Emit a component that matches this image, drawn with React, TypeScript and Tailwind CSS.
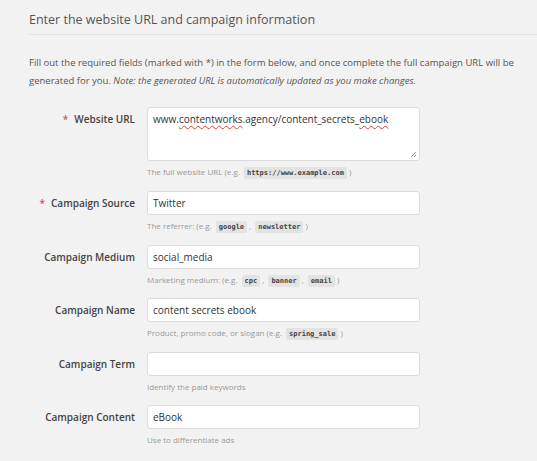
import React from "react";

type Field = {
  label: string;
  required?: boolean;
  value: string;
  hint: React.ReactNode;
};

function Code({ children }: { children: React.ReactNode }) {
  return (
    <code className="mx-[2px] rounded-[2px] bg-[#e4e3e3] px-[3px] py-[2px] font-['DejaVu_Sans_Mono',monospace] text-[7px] leading-[10px] font-bold text-[#444]">
      {children}
    </code>
  );
}

const fields: Field[] = [
  {
    label: "Campaign Source",
    required: true,
    value: "Twitter",
    hint: (
      <>
        The referrer: (e.g. <Code>google</Code>, <Code>newsletter</Code>)
      </>
    ),
  },
  {
    label: "Campaign Medium",
    value: "social_media",
    hint: (
      <>
        Marketing medium: (e.g. <Code>cpc</Code>, <Code>banner</Code>, <Code>email</Code>)
      </>
    ),
  },
  {
    label: "Campaign Name",
    value: "content secrets ebook",
    hint: (
      <>
        Product, promo code, or slogan (e.g. <Code>spring_sale</Code>)
      </>
    ),
  },
  { label: "Campaign Term", value: "", hint: "Identify the paid keywords" },
  { label: "Campaign Content", value: "eBook", hint: "Use to differentiate ads" },
];

function Label({ text, required }: { text: string; required?: boolean }) {
  return (
    <div className="w-[135px] shrink-0 text-right text-[10px] leading-[24px] font-semibold text-[#444]">
      {required && <span className="mr-[6px] text-[#d9534f]">*</span>}
      {text}
    </div>
  );
}

function Hint({ children }: { children: React.ReactNode }) {
  return <div className="mt-[4px] h-[13px] text-[8px] leading-[13px] text-[#999]">{children}</div>;
}

function Squiggle({ children }: { children: React.ReactNode }) {
  return (
    <span className="underline decoration-wavy decoration-[#e0403a] decoration-[1px] underline-offset-[2px]">
      {children}
    </span>
  );
}

export default function App() {
  return (
    <div className="min-h-[461px] w-full overflow-hidden bg-[#f3f2f2] font-['Open_Sans',sans-serif]">
      {/* Heading */}
      <div className="pl-[29px] pt-[10px]">
        <h2 className="pb-[4px] text-[12.5px] leading-[20px] text-[#555]">
          Enter the website URL and campaign information
        </h2>
        <div className="h-px bg-[#e3e2e2]" />
      </div>

      {/* Intro */}
      <p className="w-[530px] pl-[29px] pt-[19px] text-[9.5px] leading-[18px] text-[#555]">
        Fill out the required fields (marked with *) in the form below, and once complete the full campaign URL will be
        generated for you.{" "}
        <em>Note: the generated URL is automatically updated as you make changes.</em>
      </p>

      {/* Form */}
      <div className="mt-[17px] flex flex-col">
        <div className="mb-[13px] flex gap-[12px]">
          <Label text="Website URL" required />
          <div className="w-[273px]">
            <div className="relative h-[54px] rounded-[3px] border border-[#dcdcdc] bg-white px-[5px] py-[4px] text-[10px] leading-[14px] text-[#333]">
              www.<Squiggle>contentworks</Squiggle>.agency/content_secrets_<Squiggle>ebook</Squiggle>
              <svg
                className="absolute bottom-[2px] right-[2px]"
                width="8"
                height="8"
                viewBox="0 0 8 8"
              >
                <path d="M7 2 L2 7 M7 5 L5 7" stroke="#999" strokeWidth="1" />
              </svg>
            </div>
            <Hint>
              The full website URL (e.g. <Code>https://www.example.com</Code>)
            </Hint>
          </div>
        </div>

        {fields.map((f) => (
          <div key={f.label} className="mb-[12.5px] flex gap-[12px]">
            <Label text={f.label} required={f.required} />
            <div className="w-[273px]">
              <div className="h-[24px] rounded-[3px] border border-[#dcdcdc] bg-white px-[5px] text-[10px] leading-[22px] text-[#333]">
                {f.value}
              </div>
              <Hint>{f.hint}</Hint>
            </div>
          </div>
        ))}
      </div>
    </div>
  );
}
